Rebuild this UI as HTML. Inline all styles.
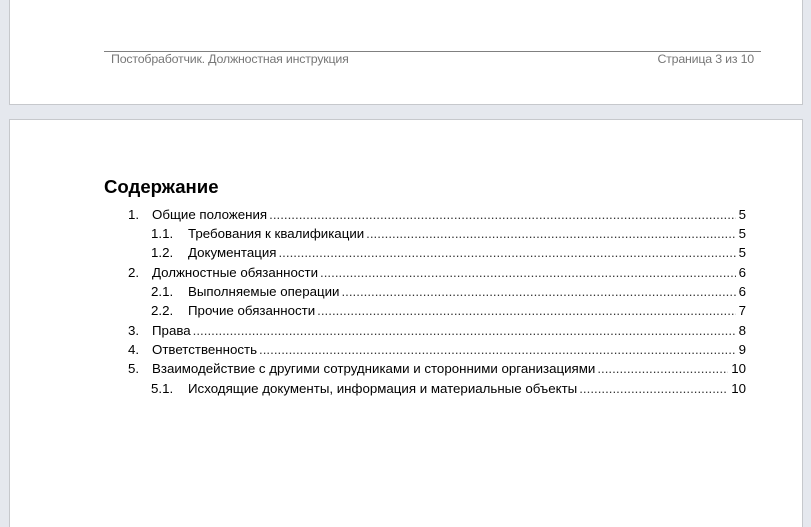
<!DOCTYPE html><html><head><meta charset="utf-8"><style>
html,body{margin:0;width:811px;height:527px;overflow:hidden}
body{background:#e5e8ee;position:relative;font-family:"Liberation Sans",Arial,sans-serif}
.pg{position:absolute;left:9px;width:792px;background:#fff;border:1px solid #c6c8cc}
.hl{position:absolute;left:104px;top:51px;width:657px;height:1px;background:#808080}
.ft{position:absolute;top:52px;font-size:12.4px;color:#777;letter-spacing:-0.2px}
h1{position:absolute;left:104px;top:176px;margin:0;font-size:18.6px;font-weight:bold;color:#000}
.r{position:absolute;height:19px;font-size:13.3px;color:#000;display:flex;white-space:nowrap;line-height:19px}
.r .n{display:inline-block}
.r .d{flex:1;overflow:hidden;margin:0 3px 0 2px;color:#333}
.r .d:after{content:"..................................................................................................................................................................................................................................................................................................";letter-spacing:0}
</style></head><body>
<div class="pg" style="top:-1px;height:104px"></div>
<div class="hl"></div>
<div class="ft" style="left:111px">Постобработчик. Должностная инструкция</div>
<div class="ft" style="right:57px">Страница 3 из 10</div>
<div class="pg" style="top:119px;height:420px"></div>
<h1>Содержание</h1>
<div class="r" style="left:128px;width:618px;top:205px"><span class="n" style="width:24px">1.</span><span>Общие положения</span><span class="d"></span><span>5</span></div>
<div class="r" style="left:151px;width:595px;top:224px"><span class="n" style="width:37px">1.1.</span><span>Требования к квалификации</span><span class="d"></span><span>5</span></div>
<div class="r" style="left:151px;width:595px;top:243px"><span class="n" style="width:37px">1.2.</span><span>Документация</span><span class="d"></span><span>5</span></div>
<div class="r" style="left:128px;width:618px;top:263px"><span class="n" style="width:24px">2.</span><span>Должностные обязанности</span><span class="d"></span><span>6</span></div>
<div class="r" style="left:151px;width:595px;top:282px"><span class="n" style="width:37px">2.1.</span><span>Выполняемые операции</span><span class="d"></span><span>6</span></div>
<div class="r" style="left:151px;width:595px;top:301px"><span class="n" style="width:37px">2.2.</span><span>Прочие обязанности</span><span class="d"></span><span>7</span></div>
<div class="r" style="left:128px;width:618px;top:321px"><span class="n" style="width:24px">3.</span><span>Права</span><span class="d"></span><span>8</span></div>
<div class="r" style="left:128px;width:618px;top:340px"><span class="n" style="width:24px">4.</span><span>Ответственность</span><span class="d"></span><span>9</span></div>
<div class="r" style="left:128px;width:618px;top:359px"><span class="n" style="width:24px">5.</span><span>Взаимодействие с другими сотрудниками и сторонними организациями</span><span class="d"></span><span>10</span></div>
<div class="r" style="left:151px;width:595px;top:379px"><span class="n" style="width:37px">5.1.</span><span>Исходящие документы, информация и материальные объекты</span><span class="d"></span><span>10</span></div>
</body></html>
